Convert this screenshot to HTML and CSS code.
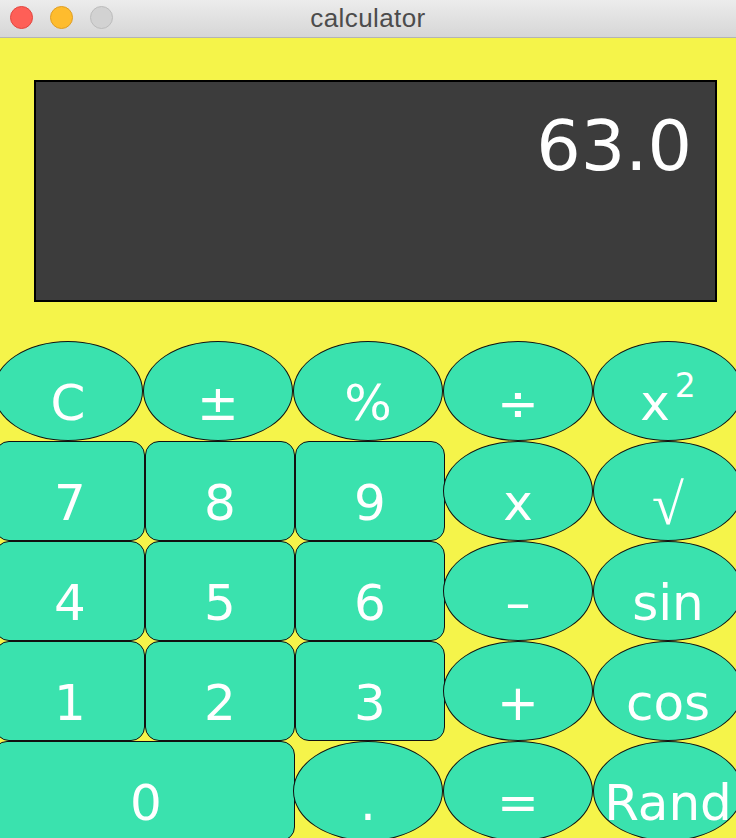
FILE: index.html
```html
<!DOCTYPE html>
<html>
<head>
<meta charset="utf-8">
<link rel="stylesheet" href="styles.css">
</head>
<body>
<div class="window">
  <div class="titlebar">
    <div class="lights">
      <span class="light red"></span>
      <span class="light amber"></span>
      <span class="light grey"></span>
    </div>
    <div class="title">calculator</div>
    <div></div>
  </div>
  <div class="body">
    <div class="display"><span class="readout">63.0</span></div>
    <div class="keys">
      <div class="key oval">C</div>
      <div class="key oval">±</div>
      <div class="key oval">%</div>
      <div class="key oval">÷</div>
      <div class="key oval"><span>x<span class="sup">2</span></span></div>

      <div class="key rect">7</div>
      <div class="key rect">8</div>
      <div class="key rect">9</div>
      <div class="key oval">x</div>
      <div class="key oval"><span class="root">√</span></div>

      <div class="key rect">4</div>
      <div class="key rect">5</div>
      <div class="key rect">6</div>
      <div class="key oval">–</div>
      <div class="key oval">sin</div>

      <div class="key rect">1</div>
      <div class="key rect">2</div>
      <div class="key rect">3</div>
      <div class="key oval">+</div>
      <div class="key oval">cos</div>

      <div class="key rect wide">0</div>
      <div class="key oval">.</div>
      <div class="key oval">=</div>
      <div class="key oval">Rand</div>
    </div>
  </div>
</div>
</body>
</html>
```
FILE: styles.css
```css
html, body {
  margin: 0;
  padding: 0;
  width: 736px;
  height: 838px;
  overflow: hidden;
  background: #f5f44a;
}

.window {
  width: 736px;
  height: 838px;
  overflow: hidden;
}

.titlebar {
  height: 38px;
  box-sizing: border-box;
  border-bottom: 1px solid #b4b4b4;
  background: linear-gradient(#ececec, #d6d6d6);
  display: grid;
  grid-template-columns: 1fr auto 1fr;
  align-items: center;
  margin-bottom: 1px;
}

.lights {
  display: flex;
  gap: 17px;
  padding-left: 10px;
  margin-top: -2px;
}

.light {
  width: 23px;
  height: 23px;
  box-sizing: border-box;
  border-radius: 50%;
  display: block;
}
.red { background: #fe5f57; border: 1px solid #e2463f; }
.amber { background: #febc2e; border: 1px solid #df9e24; }
.grey { background: #d2d2d2; border: 1px solid #bcbcbc; }

.title {
  font-family: "Liberation Sans", Arial, sans-serif;
  font-size: 26px;
  line-height: 26px;
  letter-spacing: 0.4px;
  color: #4c4c4c;
  margin-top: -2px;
}

.body {
  padding-top: 41px;
}

.display {
  margin-left: 34px;
  width: 683px;
  height: 222px;
  box-sizing: border-box;
  border: 2px solid #000;
  background: #3c3c3c;
  display: flex;
  justify-content: flex-end;
  align-items: flex-start;
  padding: 29px 23px 0 0;
}

.readout {
  font-family: "DejaVu Sans", sans-serif;
  font-size: 70px;
  line-height: 70px;
  color: #fff;
}

.keys {
  margin-top: 39px;
  margin-left: -7px;
  display: grid;
  grid-template-columns: repeat(5, 150px);
  grid-auto-rows: 100px;
}

.key {
  box-sizing: border-box;
  background: #3ae2ae;
  border: 1px solid #111;
  color: #fff;
  font-family: "DejaVu Sans", sans-serif;
  font-size: 50px;
  line-height: 50px;
  display: flex;
  justify-content: center;
  align-items: flex-start;
  padding-top: 36px;
  white-space: nowrap;
}

.sup {
  font-size: 33px;
  line-height: 0;
  vertical-align: 23px;
  margin-left: 5px;
}

.root {
  font-family: "Liberation Serif", "DejaVu Sans", serif;
  font-size: 58px;
  line-height: 50px;
  margin-top: 2px;
}

.oval {
  border-radius: 50%;
}

.rect {
  border-radius: 14px;
  margin-left: 2px;
  margin-right: -2px;
}

.wide {
  grid-column: span 2;
  margin-left: 0;
  padding-left: 4px;
}
```
